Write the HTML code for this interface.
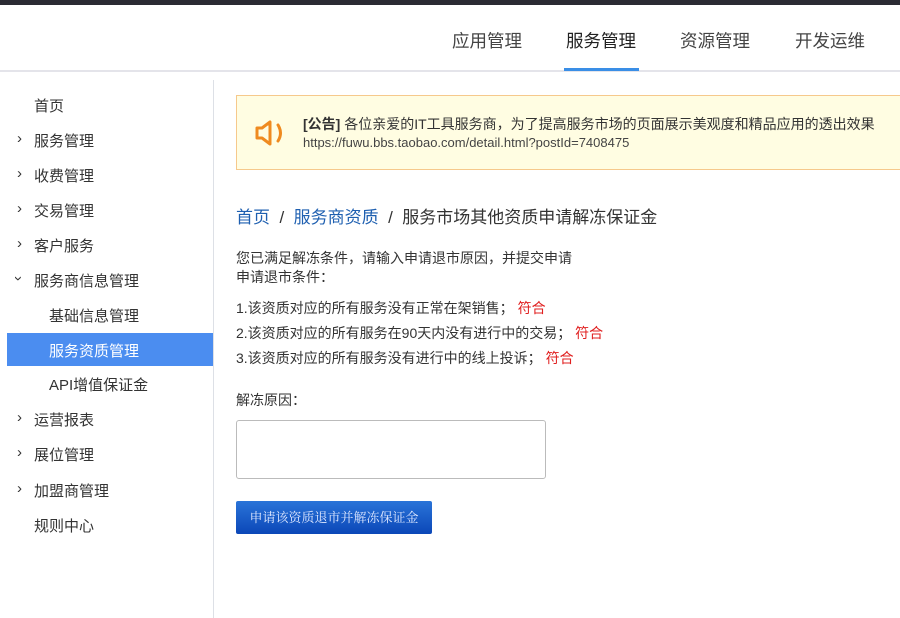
<!DOCTYPE html>
<html><head><meta charset="utf-8"><style>
*{margin:0;padding:0;box-sizing:border-box}
body{width:900px;height:618px;overflow:hidden;background:#fff;font-family:"Liberation Sans","Noto Sans CJK SC",sans-serif;color:#333;position:relative}
.top{position:absolute;left:0;top:0;width:900px;height:5px;background:#2b2b33}
.hdr{position:absolute;left:0;top:5px;width:900px;height:67px;border-bottom:2px solid #e4e4ea}
.nav{position:absolute;top:28px;font-size:17.5px;color:#444}
.ul{position:absolute;left:564px;top:68px;width:75px;height:3px;background:#3a8ee6}
.si{position:absolute;left:34px;font-size:15px;color:#333;white-space:nowrap}
.ar{position:absolute;left:17px;font-size:15px;color:#333}
.act{position:absolute;left:7px;top:333px;width:206px;height:33px;background:#4b8df0}
.vl{position:absolute;left:213px;top:80px;width:1px;height:538px;background:#dde0e6}
.note{position:absolute;left:236px;top:95px;width:670px;height:75px;background:#fffde2;border:1px solid #f6c98c}
.t{position:absolute;font-size:14px;white-space:nowrap}
</style></head><body>
<div class="top"></div>
<div class="hdr"></div>
<div class="nav" style="left:452px">应用管理</div>
<div class="nav" style="left:566px;color:#222">服务管理</div>
<div class="nav" style="left:680px">资源管理</div>
<div class="nav" style="left:795px">开发运维</div>
<div class="ul"></div>
<div class="act"></div>
<div class="vl"></div>
<div class="si" style="top:95px">首页</div>
<div class="ar" style="top:130px">›</div><div class="si" style="top:130px">服务管理</div>
<div class="ar" style="top:165px">›</div><div class="si" style="top:165px">收费管理</div>
<div class="ar" style="top:200px">›</div><div class="si" style="top:200px">交易管理</div>
<div class="ar" style="top:235px">›</div><div class="si" style="top:235px">客户服务</div>
<div class="ar" style="top:270px;transform:rotate(90deg);left:16px">›</div><div class="si" style="top:270px">服务商信息管理</div>
<div class="si" style="top:305px;left:49px">基础信息管理</div>
<div class="si" style="top:340px;left:49px;color:#fff">服务资质管理</div>
<div class="si" style="top:374px;left:49px">API增值保证金</div>
<div class="ar" style="top:409px">›</div><div class="si" style="top:409px">运营报表</div>
<div class="ar" style="top:444px">›</div><div class="si" style="top:444px">展位管理</div>
<div class="ar" style="top:480px">›</div><div class="si" style="top:480px">加盟商管理</div>
<div class="si" style="top:515px">规则中心</div>
<div class="note"></div>
<svg style="position:absolute;left:254px;top:119px" width="34" height="28" viewBox="0 0 34 28"><path d="M3 9h5l8-6v22l-8-6H3z" fill="none" stroke="#ef8a1f" stroke-width="3" stroke-linejoin="round"/><path d="M24 6q5 8 0 16" fill="none" stroke="#ef8a1f" stroke-width="3" stroke-linecap="round"/></svg>
<div class="t" style="left:303px;top:114px;color:#333"><b>[公告]</b> 各位亲爱的IT工具服务商，为了提高服务市场的页面展示美观度和精品应用的透出效果</div>
<div class="t" style="left:303px;top:135px;font-size:13px;color:#444">https://fuwu.bbs.taobao.com/detail.html?postId=7408475</div>
<div class="t" style="left:236px;top:203px;font-size:17px"><span style="color:#1e5fb0">首页</span> &nbsp;/ &nbsp;<span style="color:#1e5fb0">服务商资质</span> &nbsp;/ &nbsp;服务市场其他资质申请解冻保证金</div>
<div class="t" style="left:236px;top:248px">您已满足解冻条件，请输入申请退市原因，并提交申请</div>
<div class="t" style="left:236px;top:267px">申请退市条件：</div>
<div class="t" style="left:236px;top:298px">1.该资质对应的所有服务没有正常在架销售； <span style="color:#e02020">符合</span></div>
<div class="t" style="left:236px;top:323px">2.该资质对应的所有服务在90天内没有进行中的交易； <span style="color:#e02020">符合</span></div>
<div class="t" style="left:236px;top:348px">3.该资质对应的所有服务没有进行中的线上投诉； <span style="color:#e02020">符合</span></div>
<div class="t" style="left:236px;top:390px">解冻原因：</div>
<div style="position:absolute;left:236px;top:420px;width:310px;height:59px;border:1px solid #bbb;border-radius:3px"></div>
<div style="position:absolute;left:236px;top:501px;width:196px;height:33px;background:linear-gradient(#2a74d8,#0b47b8);border-radius:2px;color:#dfe8ff;font-size:13px;line-height:33px;text-align:center;font-family:'Liberation Serif','Noto Serif CJK SC',serif">申请该资质退市并解冻保证金</div>
</body></html>
